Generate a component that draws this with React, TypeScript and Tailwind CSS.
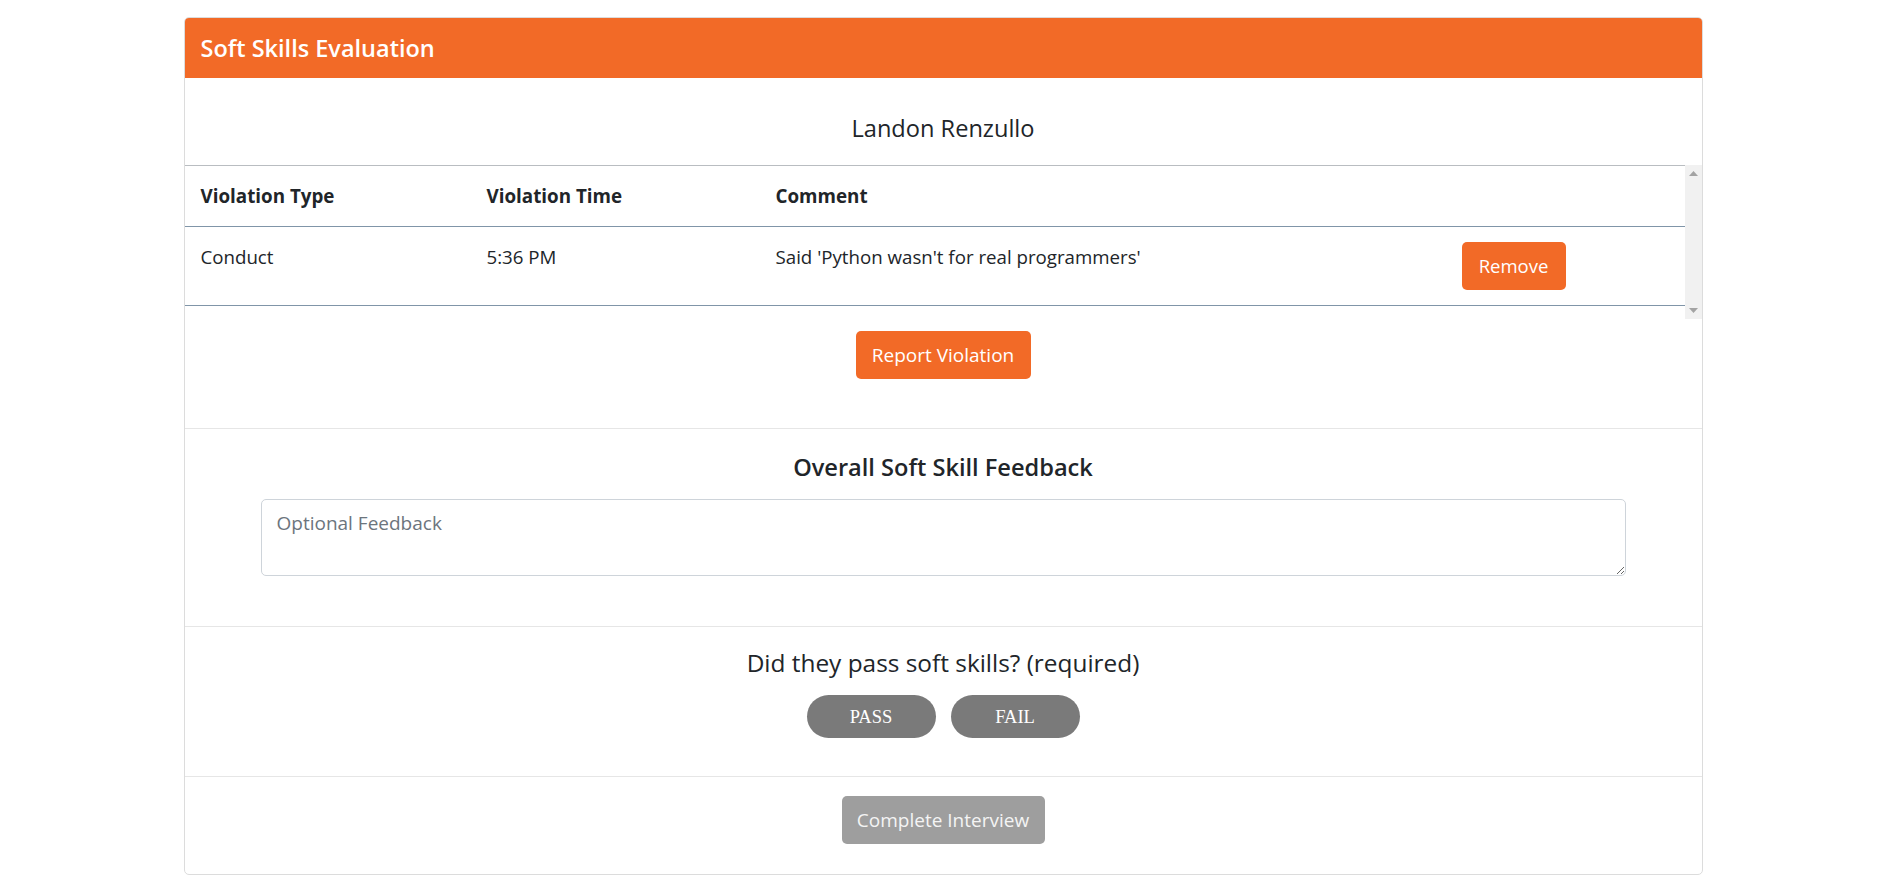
import React from "react";

const font = { fontFamily: '"Open Sans", "Noto Sans", sans-serif' };
const serif = { fontFamily: '"Liberation Serif", "Times New Roman", serif' };

function Scrollbar() {
  return (
    <div className="w-[17px] h-full bg-[#f1f1f1] flex flex-col items-center justify-between py-[6px]">
      <svg width="9" height="6" viewBox="0 0 9 6">
        <polygon points="4.5,0 9,5 0,5" fill="#a3a3a3" />
      </svg>
      <svg width="9" height="6" viewBox="0 0 9 6">
        <polygon points="0,1 9,1 4.5,6" fill="#a3a3a3" />
      </svg>
    </div>
  );
}

export default function App() {
  return (
    <div className="min-h-screen bg-white pt-[17px]" style={font}>
      <div className="mx-auto w-[1519px] border border-[#dcdcdc] rounded-[5px] overflow-hidden text-[#212529]">
        <div className="h-[60px] bg-[#f26a27] px-[16px] flex items-center">
          <h1 className="text-white text-[23.5px] font-semibold leading-[30px]">Soft Skills Evaluation</h1>
        </div>

        <div className="h-[87px] pt-[35px] text-center">
          <div className="text-[23.6px] leading-[30px]">Landon Renzullo</div>
        </div>

        <div className="h-[154px] flex">
          <div className="flex-1 border-t border-[#b9bdc1]">
            <div className="h-[61px] flex items-center border-b border-[#8095a8] text-[18.8px] font-bold">
              <div className="w-[286px] pl-[16px]">Violation Type</div>
              <div className="w-[289px] pl-[16px]">Violation Time</div>
              <div className="w-[686px] pl-[16px]">Comment</div>
              <div className="flex-1"></div>
            </div>
            <div className="h-[79px] flex items-start border-b border-[#8095a8] text-[18.7px]">
              <div className="w-[286px] pl-[16px] pt-[15px] leading-[30px]">Conduct</div>
              <div className="w-[289px] pl-[16px] pt-[15px] leading-[30px]">5:36 PM</div>
              <div className="w-[686px] pl-[16px] pt-[15px] leading-[30px]">Said 'Python wasn't for real programmers'</div>
              <div className="flex-1 pl-[16px] pt-[15px]">
                <button className="w-[104px] h-[48px] rounded-[5px] bg-[#f26a27] text-white text-[18.5px]">Remove</button>
              </div>
            </div>
          </div>
          <Scrollbar />
        </div>

        <div className="h-[110px] pt-[12px] flex justify-center border-b border-[#e6e6e6]">
          <button className="w-[175px] h-[48px] rounded-[5px] bg-[#f26a27] text-white text-[19px]">Report Violation</button>
        </div>

        <div className="h-[198px] pt-[23px] border-b border-[#e6e6e6] flex flex-col items-center">
          <h2 className="text-[23.6px] font-semibold leading-[30px]">Overall Soft Skill Feedback</h2>
          <textarea
            className="mt-[17px] w-[1365px] h-[77px] border border-[#ced4da] rounded-[5px] px-[15px] pt-[10px] pb-[6px] text-[19px] leading-[27px] placeholder:text-[#6c757d] outline-none"
            placeholder="Optional Feedback"
          />
        </div>

        <div className="h-[150px] pt-[21px] border-b border-[#e6e6e6] flex flex-col items-center">
          <h2 className="text-[24.4px] font-medium leading-[30px]">Did they pass soft skills? (required)</h2>
          <div className="mt-[17px] flex gap-[15px]">
            <button className="w-[129px] h-[43px] rounded-full bg-[#7a7a7a] text-white text-[18.5px] pt-[2px]" style={serif}>
              PASS
            </button>
            <button className="w-[129px] h-[43px] rounded-full bg-[#7a7a7a] text-white text-[18.5px] pt-[2px]" style={serif}>
              FAIL
            </button>
          </div>
        </div>

        <div className="h-[97px] pt-[19px] flex justify-center">
          <button className="w-[203px] h-[48px] rounded-[5px] bg-[#9e9e9e] text-[#f4f4f4] text-[19px]">Complete Interview</button>
        </div>
      </div>
    </div>
  );
}
